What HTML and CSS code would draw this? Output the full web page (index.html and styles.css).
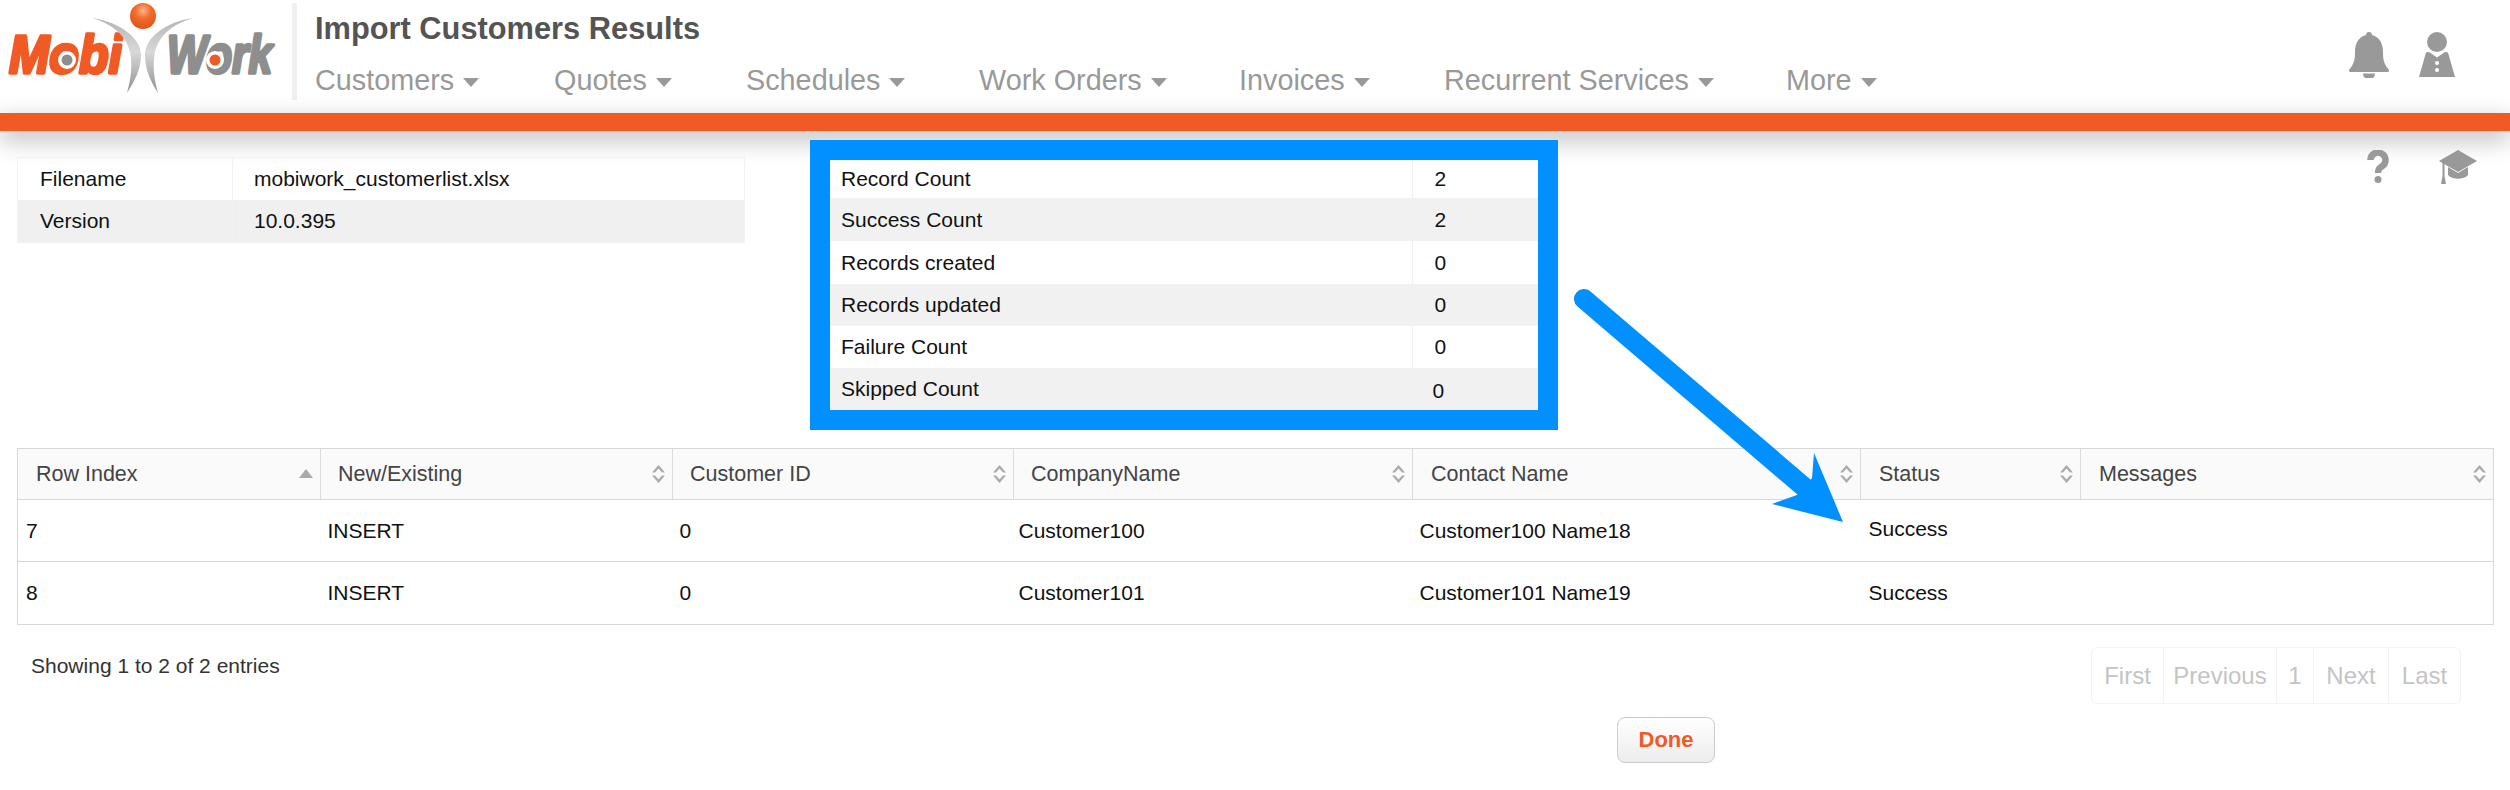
FILE: index.html
```html
<!DOCTYPE html>
<html lang="en">
<head>
<meta charset="utf-8">
<title>Import Customers Results</title>
<link rel="stylesheet" href="styles.css">
</head>
<body>
<header class="topbar">
  <svg class="logo" viewBox="0 0 292 100" aria-label="MobiWork logo">
    <defs>
      <linearGradient id="blade" x1="0" y1="0" x2="0" y2="1">
        <stop offset="0" stop-color="#b5b5b5"/>
        <stop offset=".45" stop-color="#d8d8d8"/>
        <stop offset="1" stop-color="#8f8f8f"/>
      </linearGradient>
      <radialGradient id="ball" cx=".5" cy=".3" r=".7">
        <stop offset="0" stop-color="#f9b48e"/>
        <stop offset=".45" stop-color="#f26a2a"/>
        <stop offset="1" stop-color="#e2521a"/>
      </radialGradient>
    </defs>
    <text class="logo-mobi" x="9" y="73" textLength="113" lengthAdjust="spacingAndGlyphs">Mobi</text>
    <text class="logo-work" x="167" y="73" textLength="105" lengthAdjust="spacingAndGlyphs">Work</text>
    <circle class="logo-hole" cx="67" cy="60" r="9"/>
    <circle class="logo-dot-grey" cx="67" cy="60" r="5.5"/>
    <circle class="logo-hole" cx="215" cy="60" r="9"/>
    <circle class="logo-dot-orange" cx="215" cy="60" r="5.5"/>
    <path fill="url(#blade)" d="M92 18C112 24 129 36 131 58C132 72 130 82 127 93C134 82 141 70 141 55C141 38 120 22 92 18Z"/>
    <path fill="url(#blade)" d="M193 18C173 24 156 36 154 58C153 72 155 82 158 93C151 82 145 70 145 55C145 38 165 22 193 18Z"/>
    <circle fill="url(#ball)" cx="143" cy="16" r="13"/>
  </svg>
  <div class="divider"></div>
  <div class="titles">
    <h1 class="page-title">Import Customers Results</h1>
    <nav class="nav">
      <a class="nav-item nav-customers">Customers<i class="caret"></i></a>
      <a class="nav-item nav-quotes">Quotes<i class="caret"></i></a>
      <a class="nav-item nav-schedules">Schedules<i class="caret"></i></a>
      <a class="nav-item nav-orders">Work Orders<i class="caret"></i></a>
      <a class="nav-item nav-invoices">Invoices<i class="caret"></i></a>
      <a class="nav-item nav-recurrent">Recurrent Services<i class="caret"></i></a>
      <a class="nav-item">More<i class="caret"></i></a>
    </nav>
  </div>
  <div class="top-icons">
    <svg class="icon-bell" viewBox="0 0 40 46"><path d="M20 0c-2 0-3 1-3 3C9 5 6 12 6 20c0 8-1 12-6 18q-.5 2 1.500 2h37q2 0 1.500-2c-5-6-6-10-6-18C34 12 31 5 23 3c0-2-1-3-3-3zM14 41.500a6 6 0 0 0 12 0z"/></svg>
    <svg class="icon-person" viewBox="0 0 36 46"><circle cx="18" cy="10" r="10"/><path d="M7 20.500Q7.500 20 10 20L18 25.500L26 20Q28.500 20 29 20.500L36 45H0z"/><circle class="icon-btn" cx="18" cy="31" r="2"/><circle class="icon-btn" cx="18" cy="38" r="2"/></svg>
  </div>
</header>
<div class="accent"></div>
<main class="content">
  <section class="summary">
    <table class="info-table">
      <tr><td class="info-label">Filename</td><td>mobiwork_customerlist.xlsx</td></tr>
      <tr><td class="info-label">Version</td><td>10.0.395</td></tr>
    </table>
    <div class="highlight">
      <table class="count-table">
        <tr><td class="count-label">Record Count</td><td class="count-value">2</td></tr>
        <tr><td class="count-label">Success Count</td><td class="count-value">2</td></tr>
        <tr><td class="count-label">Records created</td><td class="count-value">0</td></tr>
        <tr><td class="count-label">Records updated</td><td class="count-value">0</td></tr>
        <tr><td class="count-label">Failure Count</td><td class="count-value">0</td></tr>
        <tr><td class="count-label">Skipped Count</td><td class="count-value count-shift">0</td></tr>
      </table>
    </div>
    <div class="help-icons">
      <svg class="icon-help" viewBox="0 0 22 33"><path class="icon-stroke" d="M3.500 10a7.500 7.500 0 1 1 12 6c-3 2-4.500 3-4.500 7"/><circle cx="11" cy="29.500" r="3.500"/></svg>
      <svg class="icon-cap" viewBox="0 0 38 34"><path d="M19 0L38 11L19 22L0 11z"/><path d="M9 17L19 23L29 17V25C25 30 13 30 9 25z"/><path d="M3.500 13L5.500 12V26L7 34H2L3.500 26z"/></svg>
    </div>
  </section>

  <table class="results">
    <colgroup>
      <col class="c-row"><col class="c-new"><col class="c-id"><col class="c-co"><col class="c-contact"><col class="c-status"><col>
    </colgroup>
    <thead>
      <tr>
        <th><div class="th-in">Row Index<svg class="sort-up" viewBox="0 0 14 9"><path d="M7 0L14 9H0z"/></svg></div></th>
        <th><div class="th-in">New/Existing<svg class="sort" viewBox="0 0 13 18"><path d="M6.500 0L13 7.500H10L6.500 3.500L3 7.500H0z"/><path d="M6.500 18L13 10.500H10L6.500 14.500L3 10.500H0z"/></svg></div></th>
        <th><div class="th-in">Customer ID<svg class="sort" viewBox="0 0 13 18"><path d="M6.500 0L13 7.500H10L6.500 3.500L3 7.500H0z"/><path d="M6.500 18L13 10.500H10L6.500 14.500L3 10.500H0z"/></svg></div></th>
        <th><div class="th-in">CompanyName<svg class="sort" viewBox="0 0 13 18"><path d="M6.500 0L13 7.500H10L6.500 3.500L3 7.500H0z"/><path d="M6.500 18L13 10.500H10L6.500 14.500L3 10.500H0z"/></svg></div></th>
        <th class="th-wide"><div class="th-in">Contact Name<svg class="sort" viewBox="0 0 13 18"><path d="M6.500 0L13 7.500H10L6.500 3.500L3 7.500H0z"/><path d="M6.500 18L13 10.500H10L6.500 14.500L3 10.500H0z"/></svg></div></th>
        <th class="th-wide"><div class="th-in">Status<svg class="sort" viewBox="0 0 13 18"><path d="M6.500 0L13 7.500H10L6.500 3.500L3 7.500H0z"/><path d="M6.500 18L13 10.500H10L6.500 14.500L3 10.500H0z"/></svg></div></th>
        <th class="th-wide"><div class="th-in">Messages<svg class="sort" viewBox="0 0 13 18"><path d="M6.500 0L13 7.500H10L6.500 3.500L3 7.500H0z"/><path d="M6.500 18L13 10.500H10L6.500 14.500L3 10.500H0z"/></svg></div></th>
      </tr>
    </thead>
    <tbody>
      <tr class="row-a"><td>7</td><td>INSERT</td><td>0</td><td>Customer100</td><td>Customer100 Name18</td><td class="raised">Success</td><td></td></tr>
      <tr class="row-b"><td>8</td><td>INSERT</td><td>0</td><td>Customer101</td><td>Customer101 Name19</td><td>Success</td><td></td></tr>
    </tbody>
  </table>

  <section class="table-foot">
    <div class="entries">Showing 1 to 2 of 2 entries</div>
    <div class="pager">
      <span class="page page-first">First</span><span class="page page-prev">Previous</span><span class="page page-num">1</span><span class="page page-next">Next</span><span class="page page-last">Last</span>
    </div>
  </section>
  <div class="actions"><button class="done">Done</button></div>
</main>
<svg class="arrow" viewBox="0 0 2510 790" aria-hidden="true">
  <path class="arrow-line" d="M1584 299L1804 487"/>
  <path class="arrow-head" d="M1814 453L1843 522L1772 504L1797 495L1812 478z"/>
</svg>
</body>
</html>
```
FILE: styles.css
```css
* { box-sizing: border-box; }
html, body { margin: 0; padding: 0; }
body {
  width: 2510px;
  height: 790px;
  overflow: hidden;
  position: relative;
  background: #fff;
  color: #111;
  font-family: "Liberation Sans", Arial, sans-serif;
  font-size: 21px;
}
.topbar { display: flex; height: 113px; align-items: flex-start; }
.logo { width: 292px; height: 100px; flex: none; overflow: visible; }
.logo-mobi, .logo-work {
  font-family: "Liberation Sans", Arial, sans-serif;
  font-weight: 700;
  font-style: italic;
  font-size: 54px;
  stroke-width: 3.500;
  stroke-linejoin: round;
}
.logo-mobi { fill: #f15a24; stroke: #f15a24; }
.logo-work { fill: #8e8e8e; stroke: #8e8e8e; }
.logo-hole { fill: #fff; }
.logo-dot-grey { fill: #8e8e8e; }
.logo-dot-orange { fill: #f15a24; }
.divider { width: 5px; height: 97px; margin-top: 3px; background: #f0f0f0; flex: none; }
.titles { margin-left: 18px; padding-top: 10px; }
.page-title { margin: 0; font-size: 30.800px; line-height: 38px; font-weight: 700; color: #545454; }
.nav { display: flex; margin-top: 14px; font-size: 28.800px; line-height: 36px; color: #999; white-space: nowrap; }
.nav-item { display: flex; align-items: center; }
.nav-customers { width: 239px; }
.nav-quotes { width: 192px; }
.nav-schedules { width: 233px; }
.nav-orders { width: 260px; }
.nav-invoices { width: 205px; }
.nav-recurrent { width: 342px; }
.caret {
  display: inline-block;
  width: 0;
  height: 0;
  margin: 4px 0 0 9px;
  border-left: 8.500px solid transparent;
  border-right: 8.500px solid transparent;
  border-top: 9px solid #999;
}
.top-icons { margin-left: auto; margin-right: 55px; padding-top: 32px; display: flex; gap: 30px; }
.top-icons svg, .help-icons svg { fill: #999; display: block; }
.icon-bell { width: 40px; height: 46px; }
.icon-person { width: 36px; height: 46px; }
.top-icons .icon-person .icon-btn { fill: #fff; }
.accent { height: 18px; background: #f15a24; box-shadow: 0 8px 24px rgba(0,0,0,.3); position: relative; }
.content { padding: 0 16px 0 17px; }
.summary { display: flex; align-items: flex-start; margin-top: 9px; height: 290px; position: relative; }
.info-table, .count-table { border-collapse: collapse; table-layout: fixed; }
.info-table { width: 728px; margin-top: 17px; border: 1px solid #f2f2f2; }
.info-table td { height: 42.500px; padding: 0 0 0 21px; }
.info-table .info-label { width: 215px; padding-left: 22px; border-right: 1px solid #f2f2f2; }
.info-table tr:nth-child(2) { background: #f0f0f0; }
.highlight { margin-left: 65px; border: 20px solid #0090ff; width: 748px; height: 290px; }
.count-table { width: 708px; }
.count-table td { padding: 0; }
.count-table tr:nth-child(1) td { height: 38px; }
.count-table tr:nth-child(2) td { height: 43px; }
.count-table tr:nth-child(3) td { height: 43px; }
.count-table tr:nth-child(4) td { height: 42px; }
.count-table tr:nth-child(5) td { height: 42px; }
.count-table tr:nth-child(6) td { height: 42px; }
.count-label { width: 582px; padding-left: 11px !important; border-right: 1px solid #f2f2f2; }
.count-value { padding-left: 22px !important; }
.count-shift { padding: 3px 0 0 20px !important; }
.count-table tr:nth-child(even) { background: #f1f1f1; }
.help-icons { margin-left: auto; margin-right: 17px; padding-top: 10px; display: flex; gap: 50px; align-items: flex-start; }
.icon-help { width: 22px; height: 33px; }
.icon-help .icon-stroke { fill: none; stroke: #999; stroke-width: 6.500; }
.icon-cap { width: 38px; height: 34px; }
.results { margin-top: 18px; width: 2477px; border-collapse: collapse; table-layout: fixed; border: 1px solid #d8d8d8; }
.c-row { width: 303px; }
.c-new { width: 352px; }
.c-id { width: 341px; }
.c-co { width: 399px; }
.c-contact { width: 448px; }
.c-status { width: 220px; }
.results th { height: 51px; padding: 0 7px 0 17px; background: #fafafa; font-weight: 400; font-size: 21.500px; color: #444; text-align: left; border-right: 1px solid #dcdcdc; border-bottom: 1px solid #d8d8d8; }
.results th:first-child, .results th.th-wide { padding-left: 18px; }
.results th:last-child { border-right: 0; }
.th-in { display: flex; align-items: center; justify-content: space-between; }
.sort { width: 13px; height: 18px; fill: #aaa; flex: none; }
.sort-up { width: 14px; height: 9px; fill: #aaa; flex: none; margin-top: -2px; }
.results td { padding: 0 0 0 7px; font-size: 21px; border-bottom: 1px solid #d8d8d8; }
.results td:first-child, .results .raised, .results td:nth-child(6) { padding-left: 8px; }
.results td:nth-child(4) { padding-left: 5px; }
.row-a { height: 62px; }
.row-b { height: 63px; }
.results .raised { padding-bottom: 4px; }
.table-foot { display: flex; justify-content: space-between; align-items: flex-start; padding: 22px 33px 0 14px; }
.entries { padding-top: 6px; line-height: 26px; color: #333; }
.pager { display: flex; height: 57px; border: 1px solid #f3f3f3; border-radius: 6px; color: #c4c4c4; font-size: 24px; }
.page { display: flex; align-items: center; justify-content: center; border-left: 1px solid #f3f3f3; }
.page:first-child { border-left: 0; }
.page-first { width: 71px; }
.page-prev { width: 113px; }
.page-num { width: 37px; }
.page-next { width: 75px; }
.page-last { width: 72px; }
.actions { display: flex; margin-top: 13px; padding-left: 1600px; }
.done { width: 98px; height: 46px; padding: 0; border: 1px solid #ccc; border-radius: 8px; background: linear-gradient(#fff, #ececec); color: #f15a24; font-family: inherit; font-size: 22px; font-weight: 700; }
.arrow { position: absolute; left: 0; top: 0; width: 2510px; height: 790px; pointer-events: none; }
.arrow-line { fill: none; stroke: #0090ff; stroke-width: 20; stroke-linecap: round; }
.arrow-head { fill: #0090ff; }
```
